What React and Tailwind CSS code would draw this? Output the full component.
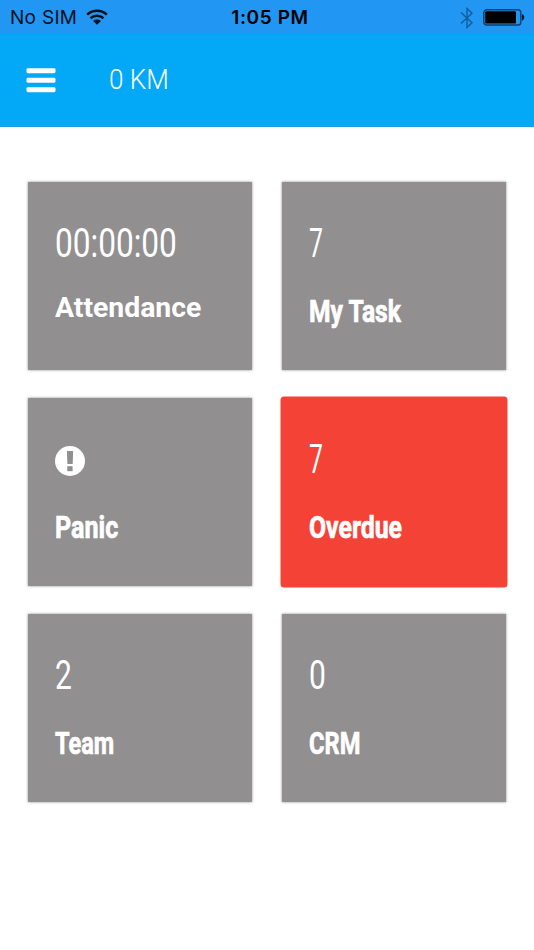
function WifiIcon() {
  return (
    <svg width="22" height="17" viewBox="0 0 22 17" fill="none" stroke="#04101c">
      <path d="M1.2 5.6C6.9.6 15.1.6 20.8 5.6" strokeWidth="2.5" />
      <path d="M4.5 9.2c3.8-3.3 9.2-3.3 13 0" strokeWidth="2.5" />
      <path d="M7.1 12c2.3-1.9 5.5-1.9 7.8 0L11 15.8z" fill="#04101c" stroke="none" />
    </svg>
  );
}

function BluetoothIcon() {
  return (
    <svg width="14" height="22" viewBox="0 0 14 22" fill="none" stroke="#135d99" strokeWidth="1.4">
      <path d="M1 5.5l11 10.3-5 4.7V1.5l5 4.7L1 16.5" />
    </svg>
  );
}

function BatteryIcon() {
  return (
    <svg width="42" height="17" viewBox="0 0 42 17" fill="none">
      <rect x="0.8" y="0.8" width="37" height="15.2" rx="2.8" stroke="#0c3f69" strokeWidth="1.4" />
      <rect x="2.2" y="2.2" width="30.8" height="12.4" rx="1.2" fill="#000" />
      <path d="M38.8 5.3h1c2 1.6 2 4.6 0 6.2h-1z" fill="#04223a" />
    </svg>
  );
}

function MenuIcon() {
  return (
    <svg width="30" height="25" viewBox="0 0 30 25" fill="#fff">
      <rect x="0.5" y="0.2" width="29" height="5" rx="1.4" />
      <rect x="0.5" y="9.7" width="29" height="5" rx="1.4" />
      <rect x="0.5" y="19.2" width="29" height="5" rx="1.4" />
    </svg>
  );
}

function PanicIcon() {
  return (
    <svg width="30" height="30" viewBox="0 0 30 30" className="mt-px">
      <circle cx="15" cy="15" r="15" fill="#fff" />
      <path d="M11.9 5h6.2l-.4 13h-5.3z" fill="#918f90" />
      <rect x="12.3" y="20.2" width="5.3" height="5" fill="#918f90" />
    </svg>
  );
}

const tiles = [
  { label: 'Attendance', value: '00:00:00', valueClass: 'scale-x-[0.79]', labelClass: 'text-[28.5px] -mt-1.5 scale-x-[0.995]' },
  { label: 'My Task', value: '7', valueClass: 'scale-x-[0.62]', labelClass: 'text-[32px] scale-x-[0.77] [-webkit-text-stroke:0.7px_white]' },
  { label: 'Panic', icon: PanicIcon, labelClass: 'text-[32px] scale-x-[0.785] [-webkit-text-stroke:0.7px_white]' },
  { label: 'Overdue', value: '7', valueClass: 'scale-x-[0.62]', labelClass: 'text-[32px] scale-x-[0.775] [-webkit-text-stroke:0.7px_white]', active: true },
  { label: 'Team', value: '2', valueClass: 'scale-x-[0.75]', labelClass: 'text-[32px] scale-x-[0.735] [-webkit-text-stroke:0.7px_white]' },
  { label: 'CRM', value: '0', valueClass: 'scale-x-[0.75]', labelClass: 'text-[32px] scale-x-[0.74] [-webkit-text-stroke:0.7px_white]' },
];

function Tile({ label, value, icon: Icon, valueClass, labelClass, active }) {
  return (
    <button
      className={`h-[187.5px] pl-[27px] flex flex-col items-start text-left text-white ${
        active
          ? 'bg-[#f44336] rounded-[2px] ring-[1.5px] ring-[#f44336]'
          : 'bg-[#918f90] rounded-[1px] shadow-[0_0_2px_1px_rgba(0,0,0,0.22)]'
      }`}
    >
      <div className="mt-[41px] h-[42px] flex items-center">
        {Icon ? (
          <Icon />
        ) : (
          <span className={`text-[40px] leading-[42px] font-normal origin-left ${valueClass}`}>{value}</span>
        )}
      </div>
      <div className="mt-[26px] h-10 flex items-center">
        <span className={`leading-10 font-bold whitespace-nowrap origin-left ${labelClass}`}>{label}</span>
      </div>
    </button>
  );
}

export default function App() {
  return (
    <div className="w-full h-[950px] bg-white overflow-hidden font-['Roboto',sans-serif]">
      {/* Status bar */}
      <div className="h-[34px] pt-px pl-[10px] pr-[9px] bg-[#2196f3] grid grid-cols-3 items-center text-[#04101c] font-['Inter',sans-serif]">
        <div className="flex items-center gap-[9px]">
          <span className="text-[19px] leading-[33px] tracking-[0.3px]">No SIM</span>
          <WifiIcon />
        </div>
        <span className="pl-[5px] text-center text-[19px] leading-[33px] font-semibold tracking-[0.6px] text-black whitespace-nowrap">1:05 PM</span>
        <div className="flex items-center justify-end gap-[9px]">
          <BluetoothIcon />
          <BatteryIcon />
        </div>
      </div>

      {/* Header */}
      <header className="h-[93px] pl-[26px] bg-[#03a9f6] border-b border-[#1b98e6] flex items-center gap-[53px]">
        <button aria-label="Menu">
          <MenuIcon />
        </button>
        <span className="text-[28px] leading-8 font-light origin-left scale-x-[0.93] text-white">0 KM</span>
      </header>

      {/* Tiles */}
      <main className="pt-[55px] px-7 grid grid-cols-[224px_224px] gap-x-[30px] gap-y-[28.5px]">
        {tiles.map((tile) => (
          <Tile key={tile.label} {...tile} />
        ))}
      </main>
    </div>
  );
}
